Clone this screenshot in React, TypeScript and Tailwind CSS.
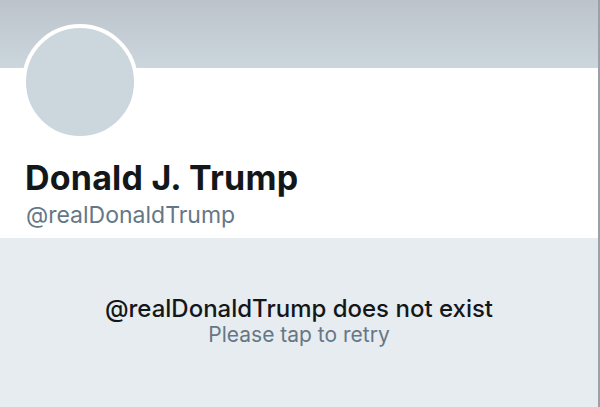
export default function App() {
  return (
    <div className="flex h-[407px] w-[600px] overflow-hidden bg-[#e6ecf0] font-['Inter',sans-serif]">
      <div className="flex w-[598px] flex-col">
        <div className="h-[68px] bg-gradient-to-b from-[#bcc3cb] to-[#ccd6dd]" />
        <div className="h-[170px] bg-white px-[22px]">
          <div className="-mt-[44px] h-[116px] w-[116px] rounded-full border-4 border-white bg-[#ccd6dd]" />
          <h1 className="mt-[18px] pl-[3px] text-[34px] font-bold leading-[40px] tracking-[0.2px] text-[#14171a]">
            Donald J. Trump
          </h1>
          <p className="mt-[3px] pl-[4px] text-[23px] leading-[28px] text-[#657786]">@realDonaldTrump</p>
        </div>
        <div className="flex flex-1 flex-col items-center pt-[57px]">
          <p className="text-[24px] font-medium leading-[28px] text-[#14171a]">
            @realDonaldTrump does not exist
          </p>
          <p className="text-[21px] leading-[24px] text-[#657786]">Please tap to retry</p>
        </div>
      </div>
      <div className="w-[2px] bg-[#9aa1a8]" />
    </div>
  );
}
